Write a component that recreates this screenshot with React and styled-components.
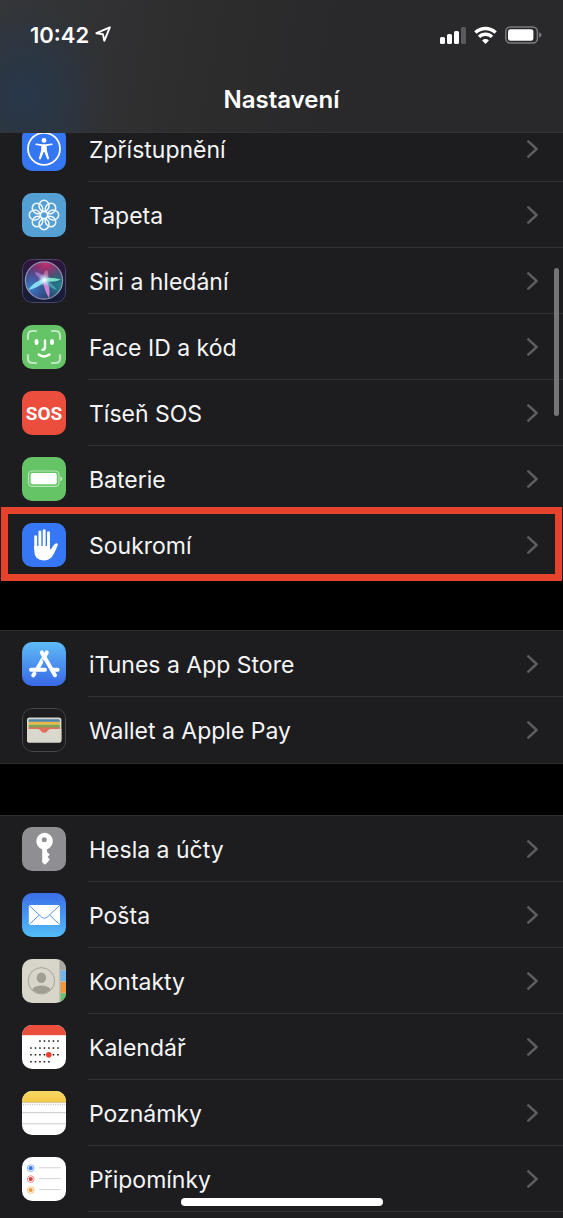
import React from 'react';
import styled, { createGlobalStyle } from 'styled-components';

const GlobalStyle = createGlobalStyle`
  * {
    box-sizing: border-box;
  }
  body {
    margin: 0;
    background-color: #000;
    color: #f5f5f7;
    font-family: Inter, 'Liberation Sans', sans-serif;
    -webkit-font-smoothing: antialiased;
  }
  body::-webkit-scrollbar {
    display: none;
  }
  html {
    scrollbar-width: none;
  }
`;

const Page = styled.div`
  display: flex;
  flex-direction: column;
  min-height: 100vh;
`;

const Header = styled.header`
  position: fixed;
  top: 0;
  left: 0;
  right: 0;
  z-index: 2;
  height: 133px;
  border-bottom: 1px solid #343436;
  background:
    radial-gradient(ellipse 90px 100px at 26px 96px, #27374b 0%, rgba(39, 55, 75, 0) 100%),
    linear-gradient(100deg, #353638 0%, #2d2d2e 35%, #29292b 60%);
`;

const StatusBar = styled.div`
  display: flex;
  align-items: center;
  justify-content: space-between;
  height: 69px;
  padding: 0 21px 0 30px;
`;

const StatusGroup = styled.div`
  display: flex;
  align-items: center;
  gap: ${(props) => props.$gap}px;
`;

const Time = styled.span`
  font-size: 22px;
  line-height: 28px;
  font-weight: 600;
  color: #fff;
`;

const Title = styled.h1`
  margin: 0;
  padding-top: 16px;
  font-size: 24px;
  line-height: 30px;
  font-weight: 600;
  text-align: center;
  color: #fff;
`;

const Main = styled.main`
  display: flex;
  flex-direction: column;
  flex: 1;
  gap: 52px;
  padding-top: 115px;
`;

const Group = styled.ul`
  list-style: none;
  margin: 0;
  padding: 0;
  background-color: #1d1d1f;
  border-top: 1px solid #2e2e30;
  flex-grow: ${(props) => (props.$open ? 1 : 0)};
  border-bottom: ${(props) => (props.$open ? 'none' : '1px solid #2e2e30')};
  margin-bottom: ${(props) => (props.$open ? '0' : '-1px')};
`;

const Item = styled.li`
  position: relative;
`;

const Row = styled.a`
  display: flex;
  align-items: center;
  gap: 22px;
  height: 66px;
  padding-left: 22px;
  color: inherit;
  text-decoration: none;
`;

const RowBody = styled.span`
  display: flex;
  align-items: center;
  justify-content: space-between;
  flex: 1;
  height: 100%;
  padding: 0 24px 0 1px;
  border-bottom: 1px solid ${(props) => (props.$last ? 'transparent' : '#323234')};
`;

const Label = styled.span`
  padding-top: 2px;
  font-size: 23px;
  line-height: 30px;
`;

const Highlight = styled.div`
  position: absolute;
  top: -5px;
  right: 1px;
  bottom: -3px;
  left: 1px;
  z-index: 1;
  border: 7px solid #e5432b;
  pointer-events: none;
`;

const Tile = styled.svg`
  display: block;
  flex: none;
  width: 44px;
  height: 44px;
  border-radius: 10px;
  background: ${(props) => props.$bg};
`;

const ScrollThumb = styled.div`
  position: fixed;
  top: 268px;
  right: 4px;
  z-index: 1;
  width: 5px;
  height: 148px;
  border-radius: 3px;
  background-color: #757577;
`;

const HomeIndicator = styled.div`
  position: fixed;
  bottom: 12px;
  left: 50%;
  z-index: 2;
  width: 202px;
  height: 8px;
  border-radius: 4px;
  background-color: #fff;
  transform: translateX(-50%);
`;

const Chevron = () => (
  <svg width="13" height="20" viewBox="0 0 13 20" fill="none" stroke="#5d5d61" strokeWidth="2.5" strokeLinecap="round" strokeLinejoin="round">
    <path d="M2.3 2.3 L10.6 10 L2.3 17.7" />
  </svg>
);

const LocationIcon = () => (
  <svg width="16" height="17" viewBox="0 0 16 17" fill="none" stroke="#fff" strokeWidth="1.9" strokeLinejoin="round">
    <path d="M14.8 1.4 L1.4 7.2 L7.9 8.3 L9.3 14.8 Z" />
  </svg>
);

const SignalIcon = () => (
  <svg width="27" height="18" viewBox="0 0 27 18" fill="#fff">
    <rect x="1" y="11" width="5" height="7" rx="1.6" />
    <rect x="8" y="8" width="5" height="10" rx="1.6" />
    <rect x="15" y="5" width="5" height="13" rx="1.6" />
    <rect x="22" y="1" width="5" height="17" rx="1.6" fill="#5a5a5c" />
  </svg>
);

const WifiIcon = () => (
  <svg width="23" height="18" viewBox="0 0 23 18" fill="none" stroke="#fff" strokeWidth="3.4">
    <path d="M1.4 6.6 A14.6 14.6 0 0 1 21.6 6.6" />
    <path d="M5 10.9 A9.3 9.3 0 0 1 18 10.9" />
    <path d="M11.5 17.9 L8.1 14.4 A4.8 4.8 0 0 1 14.9 14.4 Z" fill="#fff" stroke="none" />
  </svg>
);

const StatusBattery = () => (
  <svg width="37" height="18" viewBox="0 0 37 18">
    <rect x="0.8" y="1" width="31.6" height="16" rx="4.4" fill="none" stroke="#7b7b7d" strokeWidth="1.5" />
    <rect x="3" y="3.2" width="25.4" height="11.6" rx="2.4" fill="#fff" />
    <path d="M34.2 6.2 Q36.6 7.2 36.6 9 Q36.6 10.8 34.2 11.8 Z" fill="#7b7b7d" />
  </svg>
);

const AccessibilityIcon = () => (
  <Tile viewBox="0 0 44 44" $bg="#3577f2">
    <circle cx="22" cy="21.8" r="16" fill="none" stroke="#fff" strokeWidth="1.8" />
    <circle cx="22" cy="13.4" r="2.4" fill="#fff" />
    <path d="M14.3 16.4 L20 17.2 H24 L29.7 16.4 A0.8 0.8 0 0 1 30 18 L24.7 19 L24.9 23.5 L27 31 A1 1 0 0 1 25.1 31.7 L22.4 25 H21.6 L18.9 31.7 A1 1 0 0 1 17 31 L19.1 23.5 L19.3 19 L14 18 A0.8 0.8 0 0 1 14.3 16.4 Z" fill="#fff" />
  </Tile>
);

const WallpaperIcon = () => (
  <Tile viewBox="0 0 44 44" $bg="#549fd3">
    <g fill="none" stroke="#f2f8fc" strokeWidth="1.5">
      {[0, 45, 90, 135, 180, 225, 270, 315].map((angle) => (
        <ellipse key={angle} cx="22" cy="12.8" rx="5" ry="5.5" transform={`rotate(${angle} 22 22)`} />
      ))}
      <circle cx="22" cy="22" r="3.6" />
    </g>
  </Tile>
);

const SiriIcon = () => (
  <Tile viewBox="0 0 44 44" $bg="linear-gradient(180deg, #35133f 0%, #1c1c38 50%, #161c38 100%)">
    <defs>
      <radialGradient id="siriPink" cx="55%" cy="0%" r="75%">
        <stop offset="0" stopColor="#c43470" />
        <stop offset="1" stopColor="#b03a80" stopOpacity="0" />
      </radialGradient>
      <radialGradient id="siriBlue" cx="15%" cy="70%" r="60%">
        <stop offset="0" stopColor="#3c80cc" />
        <stop offset="1" stopColor="#3b7fd0" stopOpacity="0" />
      </radialGradient>
      <radialGradient id="siriTeal" cx="95%" cy="65%" r="60%">
        <stop offset="0" stopColor="#1f828c" />
        <stop offset="1" stopColor="#1f8a92" stopOpacity="0" />
      </radialGradient>
      <radialGradient id="siriGlow">
        <stop offset="0" stopColor="#fff" />
        <stop offset="0.35" stopColor="#d9f4ff" stopOpacity="0.75" />
        <stop offset="1" stopColor="#9adcf5" stopOpacity="0" />
      </radialGradient>
      <filter id="siriSoft" x="-20%" y="-20%" width="140%" height="140%">
        <feGaussianBlur stdDeviation="0.6" />
      </filter>
    </defs>
    <rect x="0.5" y="0.5" width="43" height="43" rx="9.5" fill="none" stroke="#4a4668" />
    <circle cx="22" cy="21.5" r="18.5" fill="#33265c" />
    <circle cx="22" cy="21.5" r="18.5" fill="url(#siriPink)" />
    <circle cx="22" cy="21.5" r="18.5" fill="url(#siriBlue)" />
    <circle cx="22" cy="21.5" r="18.5" fill="url(#siriTeal)" />
    <g filter="url(#siriSoft)">
      <path d="M22 22 Q13 17 13 13 Q20 14 24 20 Z" fill="#b58ae0" opacity="0.65" />
      <path d="M22 21 Q20 13 25 11 Q28 16 24 21 Z" fill="#e687b4" opacity="0.6" />
      <path d="M23 19 Q13 22 6 31 Q16 29 24 22 Z" fill="#8fe8f5" opacity="0.9" />
      <path d="M22 19 Q31 18 39 20.5 Q31 24 22 22 Z" fill="#7ff0d0" opacity="0.9" />
      <path d="M21 21 Q22 31 27 39 Q29 28 24 21 Z" fill="#e48be0" opacity="0.9" />
      <path d="M23 21 Q31 24 35 31 Q28 30 22 22 Z" fill="#5fd0dc" opacity="0.5" />
    </g>
    <circle cx="22.4" cy="21" r="6.5" fill="url(#siriGlow)" />
    <circle cx="22" cy="21.5" r="18.6" fill="none" stroke="#8f97b4" strokeWidth="1.2" />
  </Tile>
);

const FaceIdIcon = () => (
  <Tile viewBox="0 0 44 44" $bg="#65c466">
    <g fill="none" strokeLinecap="round">
      <g stroke="#bfe7bf" strokeWidth="2.2">
        <path d="M6 14 V10.5 Q6 6 10.5 6 H14" />
        <path d="M30 6 H33.5 Q38 6 38 10.5 V14" />
        <path d="M38 30 V33.5 Q38 38 33.5 38 H30" />
        <path d="M14 38 H10.5 Q6 38 6 33.5 V30" />
      </g>
      <path d="M23 15.5 V22 Q23 24.7 20.6 24.7" stroke="#fff" strokeWidth="2.4" />
      <path d="M16.8 29.6 Q22 33.4 27.4 29.6" stroke="#fff" strokeWidth="2.5" />
    </g>
    <ellipse cx="14.5" cy="17" rx="2" ry="3" fill="#fff" />
    <ellipse cx="30" cy="17" rx="2" ry="3" fill="#fff" />
  </Tile>
);

const SosIcon = () => (
  <Tile viewBox="0 0 44 44" $bg="#eb4e3d">
    <text x="22" y="29" fill="#fff" textAnchor="middle" fontSize="19" fontWeight="700" fontFamily="Roboto, sans-serif">
      SOS
    </text>
  </Tile>
);

const BatteryIcon = () => (
  <Tile viewBox="0 0 44 44" $bg="#65c466">
    <rect x="6.5" y="14" width="30.4" height="15.4" rx="3.6" fill="none" stroke="#b9e5ba" strokeWidth="1.2" />
    <rect x="8.6" y="16.1" width="26.2" height="11.2" rx="1.8" fill="#fff" />
    <path d="M38.2 19.2 Q40.4 20 40.4 21.7 Q40.4 23.4 38.2 24.2 Z" fill="#b9e5ba" />
  </Tile>
);

const HandIcon = () => (
  <Tile viewBox="0 0 44 44" $bg="#3577f5">
    <g fill="none" stroke="#fff" strokeWidth="2.9" strokeLinecap="round">
      <path d="M13.7 13.8 V26" />
      <path d="M17.9 9 V26" />
      <path d="M22.2 7.6 V26" />
      <path d="M26.5 9.6 V26" />
    </g>
    <path d="M12.2 23 H28 V26.4 Q29.4 26.2 30.8 23.6 Q32.4 20.6 34.2 20.2 Q36.4 20 35.8 21.8 Q34.4 26 32 30.4 Q28.6 37.4 22 37.4 Q12.2 37.4 12.2 27 Z" fill="#fff" />
  </Tile>
);

const AppStoreIcon = () => (
  <Tile viewBox="0 0 44 44" $bg="linear-gradient(180deg, #5ebcf6 0%, #3968e6 100%)">
    <g fill="none" stroke="#fff" strokeWidth="4" strokeLinecap="round">
      <path d="M24.8 10.4 L15.2 27" />
      <path d="M12.4 31.6 L11.2 33.4" />
      <path d="M19.8 10.4 L33 33.2" />
      <path d="M9 27.7 H23" />
      <path d="M30.5 27.7 H35.6" />
    </g>
    <path d="M20.5 17.4 L29.4 32.8" stroke="#4788ee" strokeWidth="1" fill="none" />
  </Tile>
);

const WalletIcon = () => (
  <Tile viewBox="0 0 44 44" $bg="#1d1d1f">
    <rect x="0.5" y="0.5" width="43" height="43" rx="9.5" fill="none" stroke="#48484a" />
    <rect x="5" y="9.6" width="34.4" height="25" rx="2.6" fill="#dad7cc" />
    <path d="M6.6 14 V12.6 Q6.6 11.2 8 11.2 H36.4 Q37.8 11.2 37.8 12.6 V14 Z" fill="#4f86b0" />
    <path d="M6.6 16.6 V15.2 Q6.6 13.8 8 13.8 H36.4 Q37.8 13.8 37.8 15.2 V16.8 H6.6 Z" fill="#e8b84a" />
    <path d="M6.6 20 V18 Q6.6 16.7 8 16.7 H36.4 Q37.8 16.7 37.8 18 V20 Z" fill="#77a750" />
    <path d="M6.6 22 V20.6 Q6.6 19.3 8 19.3 H36.4 Q37.8 19.3 37.8 20.6 V22 Z" fill="#df705c" />
    <path d="M5 21 H16.4 Q17.8 21 18.4 22.3 Q19.6 24.8 22.2 24.8 Q24.8 24.8 26 22.3 Q26.6 21 28 21 H39.4 V32 Q39.4 34.6 36.8 34.6 H7.6 Q5 34.6 5 32 Z" fill="#dad7cc" />
    <path d="M16.4 20.9 H28 Q26.6 21 26 22.3 Q24.8 24.8 22.2 24.8 Q19.6 24.8 18.4 22.3 Q17.8 21 16.4 20.9 Z" fill="#df705c" />
  </Tile>
);

const KeyIcon = () => (
  <Tile viewBox="0 0 44 44" $bg="#8e8e93">
    <path fillRule="evenodd" d="M22.3 5.8 A8.4 8.4 0 0 1 25 22.2 V25 L27.8 27.6 L25.6 30 L27.8 32.6 L25.4 35.4 L22.8 37.8 L20.2 35.2 V22.2 A8.4 8.4 0 0 1 22.3 5.8 Z M22.3 10.2 A2.5 2.5 0 1 0 22.3 15.2 A2.5 2.5 0 1 0 22.3 10.2 Z" fill="#fff" />
  </Tile>
);

const MailIcon = () => (
  <Tile viewBox="0 0 44 44" $bg="linear-gradient(180deg, #3b6ee8 0%, #53bdf8 100%)">
    <rect x="6.8" y="12" width="31.2" height="20" rx="1.6" fill="#fff" />
    <g fill="none" stroke="#5a94e4" strokeWidth="1">
      <path d="M7.3 12.6 L19.6 24.2 Q22.4 26.6 25.2 24.2 L37.5 12.6" />
      <path d="M7.3 31.4 L17 22.2" />
      <path d="M37.5 31.4 L27.8 22.2" />
    </g>
  </Tile>
);

const ContactsIcon = () => (
  <Tile viewBox="0 0 44 44" $bg="#d8d5cb">
    <rect x="38" y="0" width="6" height="11" fill="#aaa89f" />
    <rect x="38.6" y="11.3" width="5.4" height="11" fill="#6fb7ee" />
    <rect x="38.6" y="22.8" width="5.4" height="11" fill="#ee9a3c" />
    <rect x="38.6" y="34.3" width="5.4" height="10" fill="#63c567" />
    <path d="M38 0 V44" stroke="#a3a199" strokeWidth="0.9" />
    <clipPath id="contactFace">
      <circle cx="19.4" cy="21.8" r="12.6" />
    </clipPath>
    <circle cx="19.4" cy="21.8" r="13.2" fill="none" stroke="#a5a299" strokeWidth="1" />
    <ellipse cx="19.4" cy="18.8" rx="4.7" ry="5.3" fill="#a09d94" />
    <ellipse cx="19.4" cy="32.4" rx="10" ry="5.8" fill="#a09d94" clipPath="url(#contactFace)" />
  </Tile>
);

const calendarRows = [
  { y: 16, from: 2, to: 6 },
  { y: 23, from: 0, to: 6 },
  { y: 29.7, from: 0, to: 6 },
  { y: 36.7, from: 0, to: 4 },
];

const CalendarIcon = () => (
  <Tile viewBox="0 0 44 44" $bg="#fff">
    <rect width="44" height="10.2" fill="#eb4e3d" />
    {calendarRows.map((row) =>
      [0, 1, 2, 3, 4, 5, 6]
        .filter((col) => col >= row.from && col <= row.to)
        .map((col) => <rect key={`${row.y}-${col}`} x={8.2 + col * 4.5} y={row.y - 0.7} width="1.5" height="1.5" fill="#111" />)
    )}
    <circle cx="26.8" cy="29.7" r="2.8" fill="#e8402f" />
  </Tile>
);

const NotesIcon = () => (
  <Tile viewBox="0 0 44 44" $bg="#fff">
    <defs>
      <linearGradient id="notesTop" x1="0" y1="0" x2="0" y2="1">
        <stop offset="0" stopColor="#f9d866" />
        <stop offset="1" stopColor="#f4c945" />
      </linearGradient>
    </defs>
    <rect width="44" height="11.4" fill="url(#notesTop)" />
    <path d="M0 11.6 H44" stroke="#c8bfa0" strokeWidth="0.9" />
    <path d="M1 13.7 H44" stroke="#b5b5b5" strokeWidth="1" strokeDasharray="1 1.3" />
    <path d="M0 21.7 H44 M0 32.8 H44" stroke="#c9c9cd" strokeWidth="1" />
  </Tile>
);

const reminderDots = [
  { y: 11.2, color: '#3a78ee' },
  { y: 22.1, color: '#e2403b' },
  { y: 33, color: '#ee9a3a' },
];

const RemindersIcon = () => (
  <Tile viewBox="0 0 44 44" $bg="#fff">
    {reminderDots.map((dot) => (
      <g key={dot.y}>
        <circle cx="8.7" cy={dot.y} r="3.4" fill="none" stroke={dot.color} strokeWidth="0.8" opacity="0.7" />
        <circle cx="8.7" cy={dot.y} r="2.1" fill={dot.color} />
        <path d={`M17 ${dot.y - 0.4} H39`} stroke="#d5d5d9" strokeWidth="1" />
      </g>
    ))}
  </Tile>
);

const groups = [
  [
    { label: 'Zpřístupnění', Icon: AccessibilityIcon },
    { label: 'Tapeta', Icon: WallpaperIcon },
    { label: 'Siri a hledání', Icon: SiriIcon },
    { label: 'Face ID a kód', Icon: FaceIdIcon },
    { label: 'Tíseň SOS', Icon: SosIcon },
    { label: 'Baterie', Icon: BatteryIcon },
    { label: 'Soukromí', Icon: HandIcon, highlighted: true },
  ],
  [
    { label: 'iTunes a App Store', Icon: AppStoreIcon },
    { label: 'Wallet a Apple Pay', Icon: WalletIcon },
  ],
  [
    { label: 'Hesla a účty', Icon: KeyIcon },
    { label: 'Pošta', Icon: MailIcon },
    { label: 'Kontakty', Icon: ContactsIcon },
    { label: 'Kalendář', Icon: CalendarIcon },
    { label: 'Poznámky', Icon: NotesIcon },
    { label: 'Připomínky', Icon: RemindersIcon },
  ],
];

const App = () => {
  return (
    <Page>
      <GlobalStyle />
      <Header>
        <StatusBar>
          <StatusGroup $gap={6}>
            <Time>10:42</Time>
            <LocationIcon />
          </StatusGroup>
          <StatusGroup $gap={8}>
            <SignalIcon />
            <WifiIcon />
            <StatusBattery />
          </StatusGroup>
        </StatusBar>
        <Title>Nastavení</Title>
      </Header>
      <Main>
        {groups.map((items, index) => {
          const open = index === groups.length - 1;
          return (
            <Group key={index} $open={open}>
              {items.map(({ label, Icon, highlighted }, i) => (
                <Item key={label}>
                  <Row href="#">
                    <Icon />
                    <RowBody $last={!open && i === items.length - 1}>
                      <Label>{label}</Label>
                      <Chevron />
                    </RowBody>
                  </Row>
                  {highlighted && <Highlight />}
                </Item>
              ))}
            </Group>
          );
        })}
      </Main>
      <ScrollThumb />
      <HomeIndicator />
    </Page>
  );
};

export default App;
